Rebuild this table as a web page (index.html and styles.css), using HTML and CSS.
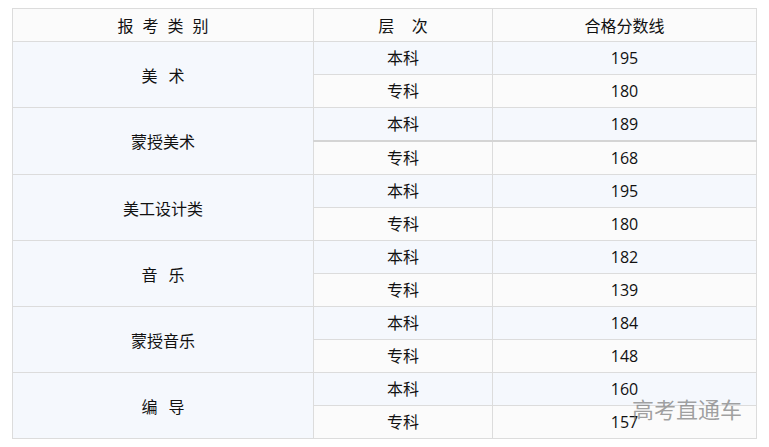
FILE: index.html
```html
<!DOCTYPE html>
<html lang="zh">
<head>
<meta charset="utf-8">
<link rel="stylesheet" href="styles.css">
</head>
<body>
<div class="wrap">
<table class="score">
  <colgroup><col class="c1"><col class="c2"><col class="c3"></colgroup>
  <thead>
    <tr><th><span class="sp4">报考类别</span></th><th><span class="sp2">层次</span></th><th>合格分数线</th></tr>
  </thead>
  <tbody>
    <tr class="odd"><td rowspan="2" class="cat"><span class="sp2s">美术</span></td><td>本科</td><td>195</td></tr>
    <tr class="even"><td>专科</td><td>180</td></tr>
    <tr class="odd"><td rowspan="2" class="cat">蒙授美术</td><td>本科</td><td>189</td></tr>
    <tr class="even thick"><td>专科</td><td>168</td></tr>
    <tr class="odd"><td rowspan="2" class="cat">美工设计类</td><td>本科</td><td>195</td></tr>
    <tr class="even"><td>专科</td><td>180</td></tr>
    <tr class="odd"><td rowspan="2" class="cat"><span class="sp2s">音乐</span></td><td>本科</td><td>182</td></tr>
    <tr class="even"><td>专科</td><td>139</td></tr>
    <tr class="odd"><td rowspan="2" class="cat">蒙授音乐</td><td>本科</td><td>184</td></tr>
    <tr class="even"><td>专科</td><td>148</td></tr>
    <tr class="odd"><td rowspan="2" class="cat"><span class="sp2s">编导</span></td><td>本科</td><td>160</td></tr>
    <tr class="even"><td>专科</td><td>157</td></tr>
  </tbody>
</table>
<div class="mark">高考直通车</div>
</div>
</body>
</html>
```
FILE: styles.css
```css
html, body { margin: 0; padding: 0; background: #fff; }
body { font-family: "Open Sans", "Noto Sans CJK SC", sans-serif; color: #111; }
.wrap { position: relative; padding: 8px 0 0 12px; }
.score { border-collapse: collapse; table-layout: fixed; width: 744px; font-size: 16px; }
.c1 { width: 301px; } .c2 { width: 179px; } .c3 { width: 264px; }
.score th, .score td { border: 1px solid #dcdcdc; height: 32px; padding: 0; text-align: center; vertical-align: middle; line-height: 20px; font-weight: normal; }
.score th { background: #fbfbfb; font-family: "Noto Sans CJK SC", sans-serif; }
.score td { font-family: "Open Sans", "Noto Sans CJK SC", sans-serif; }
.sp4 { letter-spacing: 0.56em; margin-right: -0.56em; }
.sp2 { letter-spacing: 1.1em; margin-right: -1.1em; }
.sp2s { letter-spacing: 0.7em; margin-right: -0.7em; }
.odd td { background: #f5f8fd; }
.even td { background: #fbfbfb; }
.score td.cat { background: #f5f8fd; font-family: "Noto Sans CJK SC", sans-serif; }
.thick td { border-top: 2px solid #d4d4d4; }
.mark { position: absolute; left: 632px; top: 392px; font-family: "Noto Sans CJK SC", sans-serif; font-size: 22px; color: rgba(120,120,120,0.7); }
```
